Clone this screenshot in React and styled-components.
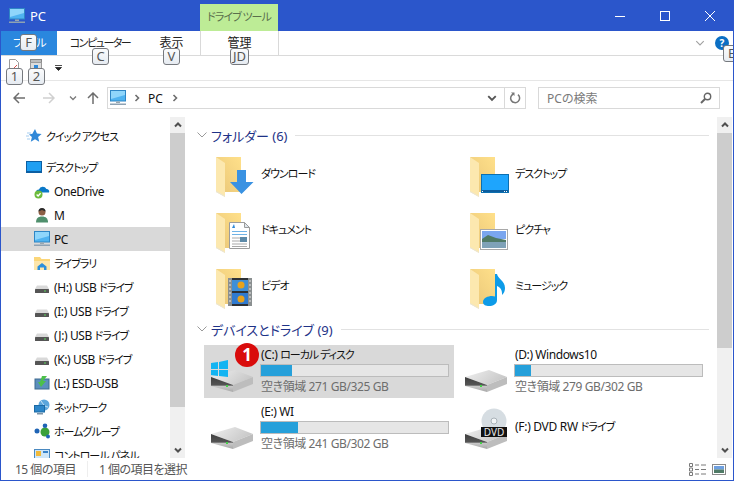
import React from "react";
import styled, { createGlobalStyle } from "styled-components";

const GlobalStyle = createGlobalStyle`
  html, body { margin: 0; padding: 0; background: #fff; overflow: hidden; }
  body {
    font-family: "Noto Sans", "Noto Sans CJK JP", sans-serif;
    font-size: 12px;
    font-feature-settings: "palt";
    color: #111;
  }
`;

const Window = styled.div`
  box-sizing: border-box;
  width: 734px;
  height: 481px;
  border: 1px solid #2b56cb;
  border-top: none;
  background: #fff;
  display: flex;
  flex-direction: column;
  overflow: hidden;
`;

// katakana in the reference is much narrower than Noto's, so it gets its own run
const Kana = styled.span`
  font-size: 11px;
  letter-spacing: -1px;
`;
const T = ({ children }) =>
  children.split(/([\u30a0-\u30ff]+(?: [\u30a0-\u30ff]+)*)/).map((part, i) =>
    i % 2 ? <Kana key={i}>{part}</Kana> : part
  );

/* title bar */
const TitleBar = styled.div`
  height: 31px;
  flex: none;
  background: #2b56cb;
  display: flex;
  align-items: center;
  color: #fff;
`;
const TitleIcon = styled.div`
  display: flex;
  margin: 0 5px 0 8px;
`;
const TitleText = styled.div`
  width: 170px;
  font-size: 13px;
  line-height: 30px;
`;
const ContextTab = styled.div`
  align-self: flex-end;
  box-sizing: border-box;
  width: 78px;
  height: 27px;
  background: #bdec96;
  color: #5a6f4c;
  text-align: center;
  line-height: 26px;
  white-space: pre;
`;
const WinButtons = styled.div`
  margin-left: auto;
  display: flex;
`;
const WinButton = styled.div`
  width: 45px;
  height: 30px;
  display: flex;
  align-items: center;
  justify-content: center;
  margin-right: ${(p) => p.$last || 0}px;
`;

/* ribbon tabs */
const RibbonTabs = styled.div`
  height: 25px;
  flex: none;
  box-sizing: border-box;
  border-bottom: 1px solid #dadada;
  display: flex;
  align-items: stretch;
`;
const RibbonTab = styled.div`
  position: relative;
  box-sizing: border-box;
  width: ${(p) => p.$width}px;
  height: 24px;
  text-align: center;
  line-height: 24px;
  background: ${(p) => (p.$file ? "#2a87de" : "transparent")};
  color: ${(p) => (p.$file ? "#fff" : "#222")};
  border-left: ${(p) => (p.$context ? "1px solid #d9d9d9" : "none")};
  border-right: ${(p) => (p.$context ? "1px solid #d9d9d9" : "none")};
  ${Kana} {
    letter-spacing: -1.5px;
  }
`;
const KeyTip = styled.div`
  position: absolute;
  z-index: 5;
  left: ${(p) => p.$left}px;
  top: ${(p) => p.$top}px;
  box-sizing: border-box;
  width: ${(p) => p.$width || 17}px;
  height: 17px;
  border: 1px solid #76797e;
  border-radius: 3px;
  background: linear-gradient(#fbfcfd, #e6ebf1);
  color: #555;
  font-size: 13px;
  line-height: 15px;
  text-align: center;
`;
const RibbonRight = styled.div`
  margin-left: auto;
  display: flex;
  align-items: center;
  position: relative;
  height: 24px;
`;
const HelpDot = styled.div`
  width: 14px;
  height: 14px;
  border-radius: 50%;
  background: #0b6fc4;
  color: #fff;
  font-size: 10px;
  font-weight: 700;
  line-height: 14px;
  text-align: center;
  margin: 0 4px 0 10px;
`;

/* quick access toolbar */
const QuickBar = styled.div`
  height: 25px;
  flex: none;
  box-sizing: border-box;
  border-bottom: 1px solid #e6e6e6;
  display: flex;
  align-items: flex-start;
  padding: 3px 0 0 7px;
  gap: 10px;
`;
const QuickButton = styled.div`
  position: relative;
  width: 12px;
  height: 12px;
  display: flex;
`;
const QuickArrow = styled.div`
  display: flex;
  margin: 6px 0 0 3px;
`;

/* address row */
const AddressRow = styled.div`
  height: 36px;
  flex: none;
  box-sizing: border-box;
  padding-top: 6px;
  display: flex;
  align-items: flex-start;
`;
const NavButtons = styled.div`
  width: 106px;
  height: 22px;
  display: flex;
  align-items: center;
  padding-left: 12px;
  box-sizing: border-box;
`;
const NavGap = styled.div`
  width: ${(p) => p.$width}px;
`;
const ArrowSvg = styled.svg`
  transform: rotate(${(p) => p.$rotate || 0}deg);
`;
const AddressBox = styled.div`
  box-sizing: border-box;
  width: 419px;
  height: 22px;
  border: 1px solid #d9d9d9;
  display: flex;
  align-items: center;
  padding-left: 2px;
`;
const CrumbArrow = styled.span`
  display: flex;
  margin-left: ${(p) => p.$left || 0}px;
`;
const Crumb = styled.span`
  margin: 0 8px 0 7px;
`;
const AddressEnd = styled.div`
  margin-left: auto;
  display: flex;
  align-items: center;
  height: 100%;
`;
const DropSlot = styled.div`
  width: 24px;
  display: flex;
  justify-content: center;
`;
const RefreshSlot = styled.div`
  width: 20px;
  height: 100%;
  border-left: 1px solid #d9d9d9;
  display: flex;
  align-items: center;
  justify-content: center;
`;
const SearchBox = styled.div`
  box-sizing: border-box;
  width: 182px;
  height: 22px;
  margin-left: 12px;
  border: 1px solid #d9d9d9;
  display: flex;
  align-items: center;
  justify-content: space-between;
  padding: 0 7px 0 8px;
  color: #7a7a7a;
`;

/* main panes */
const Panes = styled.div`
  flex: 1;
  min-height: 0;
  display: flex;
`;
const NavPane = styled.div`
  width: 169px;
  flex: none;
  overflow: hidden;
  padding-top: 7px;
  box-sizing: border-box;
`;
const NavRow = styled.div`
  height: 24px;
  flex: none;
  display: flex;
  align-items: center;
  gap: 4px;
  padding-left: ${(p) => p.$indent}px;
  margin-bottom: ${(p) => p.$after || 0}px;
  background: ${(p) => (p.$active ? "#d9d9d9" : "transparent")};
  white-space: nowrap;
`;
const NavLabel = styled.div`
  white-space: pre;
  letter-spacing: -0.4px;
`;
const NavIcon = styled.div`
  width: 16px;
  height: 16px;
  flex: none;
  display: flex;
`;
const Track = styled.div`
  width: 15px;
  flex: none;
  background: #f0f0f0;
  display: flex;
  flex-direction: column;
  margin-right: ${(p) => p.$right || 0}px;
`;
const TrackButton = styled.div`
  height: 16px;
  flex: none;
  display: flex;
  align-items: center;
  justify-content: center;
`;
const Thumb = styled.div`
  height: ${(p) => p.$height}px;
  flex: none;
  background: #cdcdcd;
`;
const TrackRest = styled.div`
  flex: 1;
`;
const Content = styled.div`
  flex: 1;
  min-width: 0;
  overflow: hidden;
  padding: 8px 8px 0 12px;
  box-sizing: border-box;
`;
const GroupHead = styled.div`
  height: 20px;
  display: flex;
  align-items: center;
  color: #1e3287;
  font-size: 13px;
  margin-top: ${(p) => p.$top || 0}px;
  margin-bottom: ${(p) => p.$bottom || 0}px;
  white-space: nowrap;
`;
const GroupChevron = styled.div`
  width: 14px;
  display: flex;
`;
const GroupLine = styled.div`
  flex: 1;
  height: 1px;
  background: #e2e2e2;
  margin-left: 8px;
`;
const Grid = styled.div`
  display: grid;
  grid-template-columns: 250px 250px;
  column-gap: 4px;
  row-gap: ${(p) => p.$rowGap}px;
  margin-left: 7px;
`;
const FolderItem = styled.div`
  height: 56px;
  display: flex;
  align-items: center;
  padding-left: 6px;
  gap: 3px;
`;
const ItemLabel = styled.div`
  white-space: pre;
  letter-spacing: -0.3px;
  padding-top: ${(p) => p.$top || 0}px;
  padding-bottom: ${(p) => p.$bottom || 0}px;
`;
const DriveItem = styled.div`
  position: relative;
  height: 53px;
  display: flex;
  align-items: ${(p) => (p.$plain ? "center" : "stretch")};
  padding-left: 6px;
  gap: 3px;
  background: ${(p) => (p.$selected ? "#d9d9d9" : "transparent")};
`;
const DriveIconBox = styled.div`
  width: 48px;
  height: 48px;
  flex: none;
  align-self: flex-end;
  display: flex;
`;
const DriveInfo = styled.div`
  width: 189px;
  display: flex;
  flex-direction: column;
  padding-top: 1px;
`;
const DriveName = styled.div`
  height: 17px;
  line-height: 17px;
  letter-spacing: -0.4px;
  white-space: pre;
`;
const Bar = styled.div`
  box-sizing: border-box;
  width: 189px;
  margin-left: -1px;
  height: 13px;
  border: 1px solid #bcbcbc;
  background: #e6e6e6;
  margin-top: 1px;
`;
const BarFill = styled.div`
  height: 100%;
  background: #26a0da;
`;
const DriveFree = styled.div`
  height: 18px;
  line-height: 18px;
  margin-top: 1px;
  color: #6d6d6d;
  letter-spacing: -0.4px;
  white-space: nowrap;
`;
const Badge = styled.div`
  position: absolute;
  left: 31px;
  top: -2px;
  width: 24px;
  height: 24px;
  border-radius: 50%;
  background: #d90c0c;
  color: #fff;
  font-weight: 700;
  font-size: 17px;
  line-height: 24px;
  text-align: center;
`;

/* status bar */
const StatusBar = styled.div`
  height: 22px;
  flex: none;
  display: flex;
  align-items: center;
  padding-left: 14px;
  color: #555;
  letter-spacing: -0.5px;
  white-space: nowrap;
`;
const StatusSep = styled.div`
  width: 1px;
  height: 16px;
  background: #eee;
  margin: 0 11px;
`;
const ViewIcons = styled.div`
  margin-left: auto;
  margin-right: 7px;
  display: flex;
  gap: 6px;
`;

/* drawings */
const Monitor = ({ size = 16 }) => (
  <svg width={size} height={size} viewBox="0 0 16 16">
    <rect x="0.5" y="0.5" width="15" height="10.5" fill="#4fb3f0" stroke="#2f86c5" />
    <path d="M1 1h14v4L1 9z" fill="#8fd6fb" />
    <rect x="6" y="11.5" width="4" height="1.5" fill="#9aa7b0" />
    <rect x="0" y="13.5" width="16" height="1.5" fill="#8ea2b3" />
  </svg>
);

const Star = () => (
  <svg width="16" height="16" viewBox="0 0 16 16">
    <path d="M9 1l2 4.6 4.6.4-3.5 3.1 1.1 4.7L9 11.3l-4.2 2.5 1.1-4.7L3 6.6l3.4-.8z" fill="#2f88d8" />
    <path d="M1 5h4M0 8h3M1 11h3" stroke="#a5cdf0" strokeWidth="1" />
  </svg>
);

const BlueDesktop = () => (
  <svg width="16" height="16" viewBox="0 0 16 16">
    <rect x="0.5" y="2.5" width="15" height="11" fill="#1f9ff2" stroke="#0c5fa3" />
    <rect x="1" y="12" width="14" height="1.5" fill="#0c5fa3" />
  </svg>
);

const OneDrive = () => (
  <svg width="16" height="16" viewBox="0 0 16 16">
    <path d="M2 9.5a3 3 0 0 1 3-3 4 4 0 0 1 7.4-.6A2.6 2.6 0 0 1 15 9.5z" fill="#0a78c8" />
    <circle cx="4.5" cy="11.5" r="4" fill="#6cbb3c" />
    <path d="M2.6 11.5l1.5 1.5 2.5-2.8" stroke="#fff" strokeWidth="1.3" fill="none" />
  </svg>
);

const Person = () => (
  <svg width="16" height="16" viewBox="0 0 16 16">
    <path d="M2 15.5c0-4 2-6 6-6s6 2 6 6z" fill="#4f8f6c" />
    <circle cx="8" cy="5" r="3.5" fill="#8c5f45" />
    <path d="M4.5 4.5a3.5 3.5 0 0 1 7 0L8 3z" fill="#2b2b2b" />
  </svg>
);

const LibraryIcon = () => (
  <svg width="16" height="16" viewBox="0 0 16 16">
    <path d="M0 2h6l1.5 2H16v11H0z" fill="#fbd679" />
    <path d="M0 6h16v9H0z" fill="#fde6ab" />
    <path d="M3.5 15v-3.5L8 8l4.500 3.500V15H10v-2.500H6V15z" fill="#2b8fdc" />
  </svg>
);

const UsbDrive = () => (
  <svg width="16" height="16" viewBox="0 0 16 16">
    <path d="M3 6.5h10l2 3.5H1z" fill="#d9d9d9" />
    <rect x="1" y="10" width="14" height="4" rx="0.5" fill="#555" />
    <rect x="10" y="11.5" width="2" height="1" fill="#5dd35d" />
  </svg>
);

const EsdDrive = () => (
  <svg width="16" height="16" viewBox="0 0 16 16">
    <rect x="1" y="4" width="14" height="10" fill="#5b8fbd" stroke="#3f6a90" />
    <path d="M8 1h5L9 6h3l-5 6-3-5h2z" fill="#4cc04a" />
  </svg>
);

const NetworkIcon = () => (
  <svg width="16" height="16" viewBox="0 0 16 16">
    <circle cx="10" cy="6" r="5.5" fill="#5ba6dc" />
    <path d="M7 2c2 3 4 6 7 6" stroke="#cfe6f6" fill="none" />
    <rect x="0.5" y="6.5" width="10" height="6.5" fill="#2c86c9" stroke="#1b6aa5" />
    <rect x="3" y="14" width="6" height="1.5" fill="#7d93a6" />
  </svg>
);

const HomeGroup = () => (
  <svg width="16" height="16" viewBox="0 0 16 16">
    <circle cx="3" cy="8" r="2.5" fill="#1f64b5" />
    <circle cx="11" cy="9" r="4.5" fill="#3aa03a" />
    <circle cx="11" cy="2.8" r="2.3" fill="#1f64b5" />
    <circle cx="14" cy="13.5" r="2" fill="#1f64b5" />
  </svg>
);

const ControlPanel = () => (
  <svg width="16" height="16" viewBox="0 0 16 16">
    <rect x="0.5" y="2.5" width="15" height="13" fill="#cfe6f8" stroke="#4a89c0" />
    <rect x="2" y="4" width="5" height="5" fill="#f0b93a" />
    <rect x="9" y="4" width="5" height="2" fill="#3a83c9" />
  </svg>
);

const Folder = ({ children }) => (
  <svg width="48" height="48" viewBox="0 0 48 48">
    <defs>
      <linearGradient id="folderBack" x1="1" y1="0" x2="0" y2="1">
        <stop offset="0" stopColor="#ffe08a" />
        <stop offset="1" stopColor="#e9c678" />
      </linearGradient>
    </defs>
    <path d="M6 8h25v35H15z" fill="url(#folderBack)" />
    <path d="M6 8l9 6v34l-9-5z" fill="#fce8af" />
    <path d="M6 43l9 5v-1l-9-5z" fill="#e8e4d6" />
    {children}
  </svg>
);

const overlays = {
  download: <path d="M27 21h9v12h7.500L31.500 45 20 33h7z" fill="#3a92e2" />,
  desktop: (
    <g>
      <rect x="17.500" y="25.500" width="27" height="18" fill="#1ea5fd" stroke="#0c6fb0" />
      <rect x="18" y="41" width="26" height="2" fill="#0c5d9e" />
      <rect x="18" y="42" width="1" height="1" fill="#fff" />
      <path d="M40 42.500h1M42 42.500h1" stroke="#fff" />
    </g>
  ),
  document: (
    <g>
      <path d="M19.500 17.500h15l5 5v21h-20z" fill="#fff" stroke="#9c9c9c" />
      <path d="M34.500 17.500v5h5z" fill="#dfe6ec" stroke="#9c9c9c" />
      <path d="M22 23l2-4 1 4z" fill="#2f88d8" />
      <path d="M22 26.500h15M22 29.500h15" stroke="#6fb3e6" />
      <path d="M22 33h8M22 36h8M22 39h15M22 41.500h15" stroke="#a9a9a9" />
      <rect x="30" y="32" width="7" height="5" fill="#5d8aa8" />
    </g>
  ),
  video: (
    <g>
      <rect x="18" y="17" width="24" height="28" fill="#2d3136" />
      <rect x="18" y="17" width="4" height="28" fill="#8a8f90" />
      <rect x="38" y="17" width="4" height="28" fill="#8a8f90" />
      <rect x="22" y="19" width="16" height="11" fill="#3e8fd8" />
      <rect x="22" y="32" width="16" height="11" fill="#2f7ad0" />
      <circle cx="31" cy="24" r="3.500" fill="#e8a21c" />
      <circle cx="31" cy="38" r="3.500" fill="#e8a21c" />
      <path d="M19 20h2M19 24h2M19 28h2M19 32h2M19 36h2M19 40h2M39 20h2M39 24h2M39 28h2M39 32h2M39 36h2M39 40h2" stroke="#e8e8e8" />
    </g>
  ),
  picture: (
    <g>
      <rect x="16.500" y="24.500" width="27" height="20" fill="#fff" stroke="#a8a8a8" />
      <rect x="18" y="26" width="24" height="8" fill="#7aa6ef" />
      <path d="M18 34l6-4 8 3 10 2v3H18z" fill="#4f7a66" />
      <rect x="18" y="37" width="24" height="6" fill="#7fa2b8" />
    </g>
  ),
  music: (
    <path
      d="M31 13h2c1 5 8 7 8 14 0 3-1 5-3 7 .6-5-2-8-5-9v14c0 4-4 6-8 6-3 0-6-1-6-4 0-4 5-6 9-6 1 0 2 .2 3 .6z"
      fill="#0d9be8"
    />
  ),
};

const Drive = ({ windows, dvd }) => (
  <svg width="48" height="48" viewBox="0 0 48 48">
    <defs>
      <linearGradient id="driveTop" x1="0" y1="0" x2="1" y2="0.4">
        <stop offset="0" stopColor="#f0f0f0" />
        <stop offset="1" stopColor="#c8c8c8" />
      </linearGradient>
      <linearGradient id="driveLeft" x1="0" y1="0" x2="0" y2="1">
        <stop offset="0" stopColor="#3f3f3f" />
        <stop offset="0.55" stopColor="#555" />
        <stop offset="0.6" stopColor="#c9c9c9" />
        <stop offset="1" stopColor="#a8a8a8" />
      </linearGradient>
    </defs>
    {dvd && <circle cx="30" cy="14" r="12.500" fill="#d6dde2" />}
    {dvd && <circle cx="30" cy="14" r="3" fill="#f2f5f7" stroke="#a9b2b8" />}
    <path d="M1 27L25 20l18 7-20 8z" fill="url(#driveTop)" />
    <path d="M1 27l22 8v7L1 36z" fill="url(#driveLeft)" />
    <path d="M23 35l20-8v7l-20 8z" fill="#bdbdbd" />
    <rect x="16" y="35" width="2" height="2" fill="#46d04a" />
    {windows && (
      <path
        d="M1 13l7-1v7H1zM9 12l9-2v9H9zM1 20h7v6l-7-1zM9 20h9v7l-9-1z"
        fill="#12b4f2"
      />
    )}
    {dvd && <rect x="17" y="20" width="26" height="10" fill="#111" />}
    {dvd && (
      <text x="30" y="28.500" textAnchor="middle" fontSize="10" fill="#e8e8e8" fontFamily="Noto Sans, sans-serif">
        DVD
      </text>
    )}
  </svg>
);

const Chevron = ({ dir = "down", color = "#6d6d6d", size = 8, stroke = 1.6 }) => {
  const d = {
    down: "M1 2.500l3 3 3-3",
    up: "M1 5.500l3-3 3 3",
    right: "M2.500 1l3 3-3 3",
  }[dir];
  return (
    <svg width={size} height={size} viewBox="0 0 8 8">
      <path d={d} fill="none" stroke={color} strokeWidth={stroke} />
    </svg>
  );
};

const Arrow = ({ color, rotate }) => (
  <ArrowSvg width="12" height="12" viewBox="0 0 12 12" $rotate={rotate}>
    <path d="M12 6H1.500M6 1L1 6l5 5" fill="none" stroke={color} strokeWidth="1.500" />
  </ArrowSvg>
);

const navItems = [
  { label: "クイック アクセス", icon: <Star />, indent: 25, after: 7 },
  { label: "デスクトップ", icon: <BlueDesktop />, indent: 25 },
  { label: "OneDrive", icon: <OneDrive />, indent: 33 },
  { label: "M", icon: <Person />, indent: 33 },
  { label: "PC", icon: <Monitor />, indent: 33, active: true },
  { label: "ライブラリ", icon: <LibraryIcon />, indent: 33 },
  { label: "(H:) USB ドライブ", icon: <UsbDrive />, indent: 33 },
  { label: "(I:) USB ドライブ", icon: <UsbDrive />, indent: 33 },
  { label: "(J:) USB ドライブ", icon: <UsbDrive />, indent: 33 },
  { label: "(K:) USB ドライブ", icon: <UsbDrive />, indent: 33 },
  { label: "(L:) ESD-USB", icon: <EsdDrive />, indent: 33 },
  { label: "ネットワーク", icon: <NetworkIcon />, indent: 33 },
  { label: "ホームグループ", icon: <HomeGroup />, indent: 33 },
  { label: "コントロール パネル", icon: <ControlPanel />, indent: 33 },
];

const folders = [
  { label: "ダウンロード", overlay: "download" },
  { label: "デスクトップ", overlay: "desktop" },
  { label: "ドキュメント", overlay: "document" },
  { label: "ピクチャ", overlay: "picture" },
  { label: "ビデオ", overlay: "video" },
  { label: "ミュージック", overlay: "music" },
];

const drives = [
  { name: "(C:) ローカル ディスク", free: "空き領域 271 GB/325 GB", used: 16.5, selected: true, windows: true },
  { name: "(D:) Windows10", free: "空き領域 279 GB/302 GB", used: 8.5 },
  { name: "(E:) WI", free: "空き領域 241 GB/302 GB", used: 20 },
  { name: "(F:) DVD RW ドライブ", dvd: true },
];

const Scrollbar = ({ thumb, right }) => (
  <Track $right={right}>
    <TrackButton>
      <Chevron dir="up" color="#505050" stroke={2} />
    </TrackButton>
    <Thumb $height={thumb} />
    <TrackRest />
    <TrackButton>
      <Chevron dir="down" color="#505050" stroke={2} />
    </TrackButton>
  </Track>
);

const GroupArrow = () => (
  <GroupChevron>
    <svg width="10" height="6" viewBox="0 0 10 6">
      <path d="M0.500 0.500L5 5l4.500-4.500" fill="none" stroke="#9a9a9a" />
    </svg>
  </GroupChevron>
);

const App = () => {
  return (
    <Window>
      <GlobalStyle />
      <TitleBar>
        <TitleIcon>
          <Monitor />
        </TitleIcon>
        <TitleText>PC</TitleText>
        <ContextTab>
          <T>ドライブ ツール</T>
        </ContextTab>
        <WinButtons>
          <WinButton>
            <svg width="10" height="10" viewBox="0 0 10 10">
              <path d="M0 5.500h10" stroke="#fff" />
            </svg>
          </WinButton>
          <WinButton>
            <svg width="10" height="10" viewBox="0 0 10 10">
              <rect x="0.500" y="0.500" width="9" height="9" fill="none" stroke="#fff" />
            </svg>
          </WinButton>
          <WinButton $last={1}>
            <svg width="10" height="10" viewBox="0 0 10 10">
              <path d="M0 0l10 10M10 0L0 10" stroke="#fff" />
            </svg>
          </WinButton>
        </WinButtons>
      </TitleBar>

      <RibbonTabs>
        <RibbonTab $file $width={56}>
          <T>ファイル</T>
          <KeyTip $left={19} $top={3}>F</KeyTip>
        </RibbonTab>
        <RibbonTab $width={86}>
          <T>コンピューター</T>
          <KeyTip $left={35} $top={17}>C</KeyTip>
        </RibbonTab>
        <RibbonTab $width={57}>
          表示
          <KeyTip $left={20} $top={17}>V</KeyTip>
        </RibbonTab>
        <RibbonTab $context $width={79}>
          管理
          <KeyTip $left={29} $top={17} $width={19}>JD</KeyTip>
        </RibbonTab>
        <RibbonRight>
          <Chevron color="#a0a0a0" size={10} stroke={0.9} />
          <HelpDot>?</HelpDot>
          <KeyTip $left={28} $top={14}>E</KeyTip>
        </RibbonRight>
      </RibbonTabs>

      <QuickBar>
        <QuickButton>
          <svg width="12" height="12" viewBox="0 0 12 12">
            <path d="M1.500 0.500h6l3 3v8h-9z" fill="#fff" stroke="#9a9a9a" />
            <path d="M6 9l3-3" stroke="#d9534f" />
          </svg>
          <KeyTip $left={-2} $top={9}>1</KeyTip>
        </QuickButton>
        <QuickButton>
          <svg width="12" height="12" viewBox="0 0 12 12">
            <rect x="0.500" y="0.500" width="11" height="3" fill="#bdbdbd" stroke="#8a8a8a" />
            <rect x="0.500" y="3.500" width="11" height="8" fill="#dcdcdc" stroke="#9a9a9a" />
            <rect x="4" y="6" width="4" height="3" fill="#2f88d8" />
          </svg>
          <KeyTip $left={-2} $top={9}>2</KeyTip>
        </QuickButton>
        <QuickArrow>
          <svg width="8" height="6" viewBox="0 0 8 6">
            <path d="M0 0.500h7M0.500 2.500h6L3.500 5.500z" fill="#222" stroke="#222" strokeWidth="0.800" />
          </svg>
        </QuickArrow>
      </QuickBar>

      <AddressRow>
        <NavButtons>
          <Arrow color="#6d6d6d" />
          <NavGap $width={18} />
          <Arrow color="#d0d0d0" rotate={180} />
          <NavGap $width={14} />
          <Chevron color="#7a7a7a" stroke={1.3} />
          <NavGap $width={10} />
          <Arrow color="#6d6d6d" rotate={90} />
        </NavButtons>
        <AddressBox>
          <Monitor />
          <CrumbArrow $left={7}>
            <Chevron dir="right" />
          </CrumbArrow>
          <Crumb>PC</Crumb>
          <CrumbArrow>
            <Chevron dir="right" />
          </CrumbArrow>
          <AddressEnd>
            <DropSlot>
              <Chevron color="#555" size={10} stroke={1.5} />
            </DropSlot>
            <RefreshSlot>
              <svg width="12" height="12" viewBox="0 0 12 12">
                <path d="M3.500 2.500A4.500 4.500 0 1 0 8 2" fill="none" stroke="#777" strokeWidth="1.500" transform="rotate(15 6 6)" />
                <path d="M2 0.500h3.500V4z" fill="#777" />
              </svg>
            </RefreshSlot>
          </AddressEnd>
        </AddressBox>
        <SearchBox>
          PCの検索
          <svg width="12" height="12" viewBox="0 0 12 12">
            <circle cx="7.500" cy="4.500" r="3.200" fill="none" stroke="#666" strokeWidth="1.400" />
            <path d="M5 7L1 11" stroke="#666" strokeWidth="2" />
          </svg>
        </SearchBox>
      </AddressRow>

      <Panes>
        <NavPane>
          {navItems.map((item) => (
            <NavRow key={item.label} $indent={item.indent} $after={item.after} $active={item.active}>
              <NavIcon>{item.icon}</NavIcon>
              <NavLabel>
                <T>{item.label}</T>
              </NavLabel>
            </NavRow>
          ))}
        </NavPane>
        <Scrollbar thumb={274} />
        <Content>
          <GroupHead>
            <GroupArrow />
            フォルダー (6)
            <GroupLine />
          </GroupHead>
          <Grid $rowGap={0}>
            {folders.map((f) => (
              <FolderItem key={f.label}>
                <Folder>{overlays[f.overlay]}</Folder>
                <ItemLabel $top={1}>
                  <T>{f.label}</T>
                </ItemLabel>
              </FolderItem>
            ))}
          </Grid>
          <GroupHead $top={6} $bottom={6}>
            <GroupArrow />
            デバイスとドライブ (9)
            <GroupLine />
          </GroupHead>
          <Grid $rowGap={4}>
            {drives.map((d) => (
              <DriveItem key={d.name} $selected={d.selected} $plain={d.dvd}>
                <DriveIconBox>
                  <Drive windows={d.windows} dvd={d.dvd} />
                </DriveIconBox>
                {d.dvd ? (
                  <ItemLabel $bottom={4}>
                    <T>{d.name}</T>
                  </ItemLabel>
                ) : (
                  <DriveInfo>
                    <DriveName>
                      <T>{d.name}</T>
                    </DriveName>
                    <Bar>
                      <BarFill style={{ width: `${d.used}%` }} />
                    </Bar>
                    <DriveFree>{d.free}</DriveFree>
                  </DriveInfo>
                )}
                {d.selected && <Badge>1</Badge>}
              </DriveItem>
            ))}
          </Grid>
        </Content>
        <Scrollbar thumb={215} right={1} />
      </Panes>

      <StatusBar>
        15 個の項目
        <StatusSep />
        1 個の項目を選択
        <ViewIcons>
          <svg width="17" height="13" viewBox="0 0 17 13">
            <path d="M0.500 0.500h3v3h-3zM0.500 5h3v3h-3zM0.500 9.500h3v3h-3z" fill="none" stroke="#7a7a7a" />
            <path d="M6 2h4M12 2h5M6 6.500h4M12 6.500h5M6 11h4M12 11h5" stroke="#7a7a7a" />
          </svg>
          <svg width="14" height="13" viewBox="0 0 14 13">
            <rect x="0.500" y="1.500" width="13" height="10" fill="#fff" stroke="#8a8a8a" />
            <rect x="2" y="3" width="10" height="3.500" fill="#6d9fe0" />
            <rect x="2" y="6.500" width="10" height="3.500" fill="#4f7a66" />
          </svg>
        </ViewIcons>
      </StatusBar>
    </Window>
  );
};

export default App;
